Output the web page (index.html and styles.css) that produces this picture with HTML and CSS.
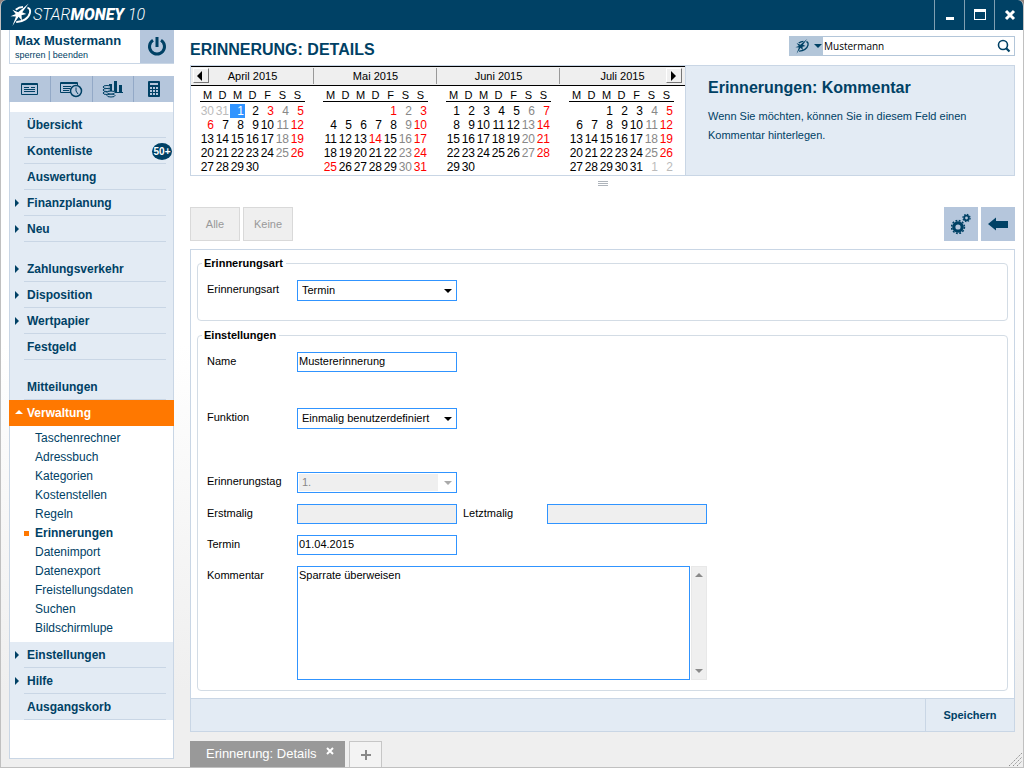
FILE: index.html
```html
<!DOCTYPE html>
<html lang="de">
<head>
<meta charset="utf-8">
<title>StarMoney 10</title>
<link rel="stylesheet" href="styles.css">
</head>
<body>
<svg class="defs" width="0" height="0" aria-hidden="true">
  <symbol id="star" viewBox="0 0 24 24">
    <path fill="currentColor" d="M19.500 0 12.800 9.200 17 11 12 12.200 12.500 18 9 13.800 2.500 23.500 6.200 13.600 .5 13.200 6 11 2.500 6.500 8.500 9z"/>
    <path fill="none" stroke="currentColor" stroke-width="2" d="M6 6.500C8.500 4.500 11 3.700 13.500 3.700M18.200 4.300C20.600 5 21.500 7 20.800 10 19.600 15 13.500 19.500 6.500 19.300"/>
  </symbol>
</svg>
<div class="app">
  <header class="titlebar">
    <div class="logo">
      <svg class="logo-mark" aria-hidden="true"><use href="#star"/></svg>
      <span class="logo-text">STAR<b>MONEY</b> 10</span>
    </div>
    <div class="window-controls">
      <button type="button" aria-label="Minimieren"><svg width="30" height="30"><path fill="#fff" d="M11 17h8v3h-8z"/></svg></button>
      <button type="button" aria-label="Maximieren"><svg width="30" height="30"><path fill="#fff" fill-rule="evenodd" d="M9 9h12v11H9zM10 12v7h10v-7z"/></svg></button>
      <button type="button" aria-label="Schließen"><svg width="30" height="30"><path stroke="#fff" stroke-width="3" d="M11 11l8 8M19 11l-8 8"/></svg></button>
    </div>
  </header>

  <div class="body">
    <aside class="sidebar">
      <div class="user">
        <div class="user-info">
          <strong>Max Mustermann</strong>
          <span><a href="#">sperren</a> | <a href="#">beenden</a></span>
        </div>
        <button type="button" class="power" aria-label="Beenden"><svg width="20" height="22" fill="none" stroke="currentColor" stroke-width="3"><path d="M6 4.200a7.500 7.500 0 1 0 8 0M10 1v10"/></svg></button>
      </div>
      <div class="shortcuts">
        <button type="button" aria-label="Konten"><svg width="18" height="14"><path fill="none" stroke="currentColor" stroke-width="1" d="M.5 1.500h16v11H.5zM.5 2.500h16M3 5.500h5M10 5.500h4M3 7.500h11M3 9.500h11"/></svg></button>
        <button type="button" aria-label="Termine"><svg width="24" height="18" fill="none" stroke="currentColor"><path d="M12 12.500H1.500v-10h17V5M1.500 3.500h17M4 6.500h8M4 8.500h7M4 10.500h6"/><circle cx="17" cy="11" r="5.500" stroke-width="1.500"/><path d="M17 7.500V11l2 3"/></svg></button>
        <button type="button" aria-label="Auswertung"><svg width="22" height="18" fill="currentColor"><path d="M7 4h3v9H7zM12 1h3v12h-3zM17 5h3v8h-3zM12 12h9v1h-9z"/><g fill="#b5c6dc" stroke="currentColor"><ellipse cx="5" cy="13" rx="4" ry="1.500"/><ellipse cx="5" cy="10" rx="4" ry="1.500"/><ellipse cx="5" cy="7" rx="4" ry="1.500"/><ellipse cx="9" cy="15.500" rx="4" ry="1.500"/><ellipse cx="9" cy="12.500" rx="4" ry="1.500"/></g></svg></button>
        <button type="button" aria-label="Taschenrechner"><svg width="14" height="18"><rect x="1" y="1" width="12" height="16" rx="1" fill="currentColor"/><path fill="#b5c6dc" d="M3 3h8v2H3zM3 7h2v2H3zM6 7h2v2H6zM9 7h2v2H9zM3 10h2v2H3zM6 10h2v2H6zM9 10h2v2H9zM3 13h2v2H3zM6 13h2v2H6zM9 13h2v2H9z"/></svg></button>
      </div>
      <nav class="nav">
        <ul class="nav-list">
          <li><a href="#">Übersicht</a></li>
          <li><a href="#">Kontenliste</a><span class="badge">50+</span></li>
          <li><a href="#">Auswertung</a></li>
          <li class="has-sub"><a href="#">Finanzplanung</a></li>
          <li class="has-sub"><a href="#">Neu</a></li>
          <li class="has-sub group-start"><a href="#">Zahlungsverkehr</a></li>
          <li class="has-sub"><a href="#">Disposition</a></li>
          <li class="has-sub"><a href="#">Wertpapier</a></li>
          <li><a href="#">Festgeld</a></li>
          <li class="group-start"><a href="#">Mitteilungen</a></li>
          <li class="open"><a href="#">Verwaltung</a></li>
        </ul>
        <ul class="subnav">
          <li><a href="#">Taschenrechner</a></li>
          <li><a href="#">Adressbuch</a></li>
          <li><a href="#">Kategorien</a></li>
          <li><a href="#">Kostenstellen</a></li>
          <li><a href="#">Regeln</a></li>
          <li class="current"><a href="#">Erinnerungen</a></li>
          <li><a href="#">Datenimport</a></li>
          <li><a href="#">Datenexport</a></li>
          <li><a href="#">Freistellungsdaten</a></li>
          <li><a href="#">Suchen</a></li>
          <li><a href="#">Bildschirmlupe</a></li>
        </ul>
        <ul class="nav-list">
          <li class="has-sub"><a href="#">Einstellungen</a></li>
          <li class="has-sub"><a href="#">Hilfe</a></li>
          <li><a href="#">Ausgangskorb</a></li>
        </ul>
      </nav>
    </aside>

    <main class="main">
      <div class="page-head">
        <h1>ERINNERUNG: DETAILS</h1>
        <form class="search">
          <button type="button" class="search-scope" aria-label="Suchbereich"><svg class="scope-mark" aria-hidden="true"><use href="#star"/></svg><svg width="8" height="5"><path fill="currentColor" d="M0 0h8L4 4z"/></svg></button>
          <input type="text" value="Mustermann" aria-label="Suche">
          <button type="button" class="search-go" aria-label="Suchen"><svg width="14" height="14" fill="none" stroke="currentColor"><circle cx="6" cy="6" r="4.500" stroke-width="1.600"/><path stroke-width="2.200" d="M9 9l3.500 3.500"/></svg></button>
        </form>
      </div>

      <div class="overview">
        <section class="calendar" aria-label="Kalender">
          <div class="month">
            <div class="month-head"><button type="button" class="prev" aria-label="Zurück"><svg width="12" height="12"><path d="M8 1v10L3 6z"/></svg></button>April 2015</div>
            <table>
              <thead><tr><th>M</th><th>D</th><th>M</th><th>D</th><th>F</th><th>S</th><th>S</th></tr></thead>
              <tbody>
                <tr><td class="out">30</td><td class="out">31</td><td class="selected">1</td><td>2</td><td class="off">3</td><td>4</td><td>5</td></tr>
                <tr><td class="off">6</td><td>7</td><td>8</td><td>9</td><td>10</td><td>11</td><td>12</td></tr>
                <tr><td>13</td><td>14</td><td>15</td><td>16</td><td>17</td><td>18</td><td>19</td></tr>
                <tr><td>20</td><td>21</td><td>22</td><td>23</td><td>24</td><td>25</td><td>26</td></tr>
                <tr><td>27</td><td>28</td><td>29</td><td>30</td><td></td><td></td><td></td></tr>
              </tbody>
            </table>
          </div>
          <div class="month">
            <div class="month-head">Mai 2015</div>
            <table>
              <thead><tr><th>M</th><th>D</th><th>M</th><th>D</th><th>F</th><th>S</th><th>S</th></tr></thead>
              <tbody>
                <tr><td></td><td></td><td></td><td></td><td class="off">1</td><td>2</td><td>3</td></tr>
                <tr><td>4</td><td>5</td><td>6</td><td>7</td><td>8</td><td>9</td><td>10</td></tr>
                <tr><td>11</td><td>12</td><td>13</td><td class="off">14</td><td>15</td><td>16</td><td>17</td></tr>
                <tr><td>18</td><td>19</td><td>20</td><td>21</td><td>22</td><td>23</td><td>24</td></tr>
                <tr><td class="off">25</td><td>26</td><td>27</td><td>28</td><td>29</td><td>30</td><td>31</td></tr>
              </tbody>
            </table>
          </div>
          <div class="month">
            <div class="month-head">Juni 2015</div>
            <table>
              <thead><tr><th>M</th><th>D</th><th>M</th><th>D</th><th>F</th><th>S</th><th>S</th></tr></thead>
              <tbody>
                <tr><td>1</td><td>2</td><td>3</td><td>4</td><td>5</td><td>6</td><td>7</td></tr>
                <tr><td>8</td><td>9</td><td>10</td><td>11</td><td>12</td><td>13</td><td>14</td></tr>
                <tr><td>15</td><td>16</td><td>17</td><td>18</td><td>19</td><td>20</td><td>21</td></tr>
                <tr><td>22</td><td>23</td><td>24</td><td>25</td><td>26</td><td>27</td><td>28</td></tr>
                <tr><td>29</td><td>30</td><td></td><td></td><td></td><td></td><td></td></tr>
              </tbody>
            </table>
          </div>
          <div class="month">
            <div class="month-head">Juli 2015<button type="button" class="next" aria-label="Weiter"><svg width="12" height="12"><path d="M4 1v10l5-5z"/></svg></button></div>
            <table>
              <thead><tr><th>M</th><th>D</th><th>M</th><th>D</th><th>F</th><th>S</th><th>S</th></tr></thead>
              <tbody>
                <tr><td></td><td></td><td>1</td><td>2</td><td>3</td><td>4</td><td>5</td></tr>
                <tr><td>6</td><td>7</td><td>8</td><td>9</td><td>10</td><td>11</td><td>12</td></tr>
                <tr><td>13</td><td>14</td><td>15</td><td>16</td><td>17</td><td>18</td><td>19</td></tr>
                <tr><td>20</td><td>21</td><td>22</td><td>23</td><td>24</td><td>25</td><td>26</td></tr>
                <tr><td>27</td><td>28</td><td>29</td><td>30</td><td>31</td><td class="out">1</td><td class="out">2</td></tr>
              </tbody>
            </table>
          </div>
        </section>
        <section class="hint">
          <h2>Erinnerungen: Kommentar</h2>
          <p>Wenn Sie möchten, können Sie in diesem Feld einen Kommentar hinterlegen.</p>
        </section>
      </div>
      <div class="splitter"><svg width="10" height="5"><path stroke="#aeb4bb" d="M0 .5h10M0 2.500h10M0 4.500h10"/></svg></div>

      <div class="toolbar">
        <button type="button" class="text-button" disabled>Alle</button>
        <button type="button" class="text-button" disabled>Keine</button>
        <button type="button" class="icon-button push" aria-label="Optionen"><svg width="20" height="22" fill="none" stroke="currentColor"><circle cx="7" cy="14" r="4.200" stroke-width="3.200"/><circle cx="7" cy="14" r="6.400" stroke-width="1.600" stroke-dasharray="1.850 1.500"/><circle cx="15.500" cy="5" r="2.300" stroke-width="1.800"/><circle cx="15.500" cy="5" r="3.600" stroke-width="1.200" stroke-dasharray="1.450 1.380"/></svg></button>
        <button type="button" class="icon-button" aria-label="Zurück"><svg width="20" height="14"><path fill="currentColor" d="M0 7l8-6.500V4h12v7H8v2.500z"/></svg></button>
      </div>

      <form class="panel">
        <div class="panel-body">
          <fieldset>
            <legend>Erinnerungsart</legend>
            <div class="field">
              <label for="art">Erinnerungsart</label>
              <span class="select"><select id="art"><option>Termin</option></select></span>
            </div>
          </fieldset>
          <fieldset class="settings">
            <legend>Einstellungen</legend>
            <div class="field">
              <label for="name">Name</label>
              <input id="name" type="text" value="Mustererinnerung">
            </div>
            <div class="field after-name">
              <label for="funktion">Funktion</label>
              <span class="select"><select id="funktion"><option>Einmalig benutzerdefiniert</option></select></span>
            </div>
            <div class="field after-function">
              <label for="tag">Erinnerungstag</label>
              <span class="select is-disabled"><select id="tag" disabled><option>1.</option></select></span>
            </div>
            <div class="field">
              <label for="erst">Erstmalig</label>
              <input id="erst" type="text" disabled>
              <label for="letzt" class="second">Letztmalig</label>
              <input id="letzt" type="text" disabled>
            </div>
            <div class="field">
              <label for="termin">Termin</label>
              <input id="termin" type="text" value="01.04.2015">
            </div>
            <div class="field">
              <label for="kommentar">Kommentar</label>
              <textarea id="kommentar">Sparrate überweisen</textarea>
              <div class="scrollbar" aria-hidden="true"><svg width="8" height="4"><path fill="#8a8a8a" d="M4 0l4 4H0z"/></svg><svg width="8" height="4"><path fill="#8a8a8a" d="M0 0h8L4 4z"/></svg></div>
            </div>
          </fieldset>
        </div>
        <div class="panel-foot"><button type="button">Speichern</button></div>
      </form>

      <div class="tabs">
        <div class="tab"><a href="#">Erinnerung: Details</a><button type="button" aria-label="Tab schließen"><svg width="8" height="8"><path stroke="currentColor" stroke-width="2" d="M1 1l6 6M7 1L1 7"/></svg></button></div>
        <button type="button" class="tab-add" aria-label="Neuer Tab"><svg width="10" height="10"><path stroke="currentColor" stroke-width="2" d="M0 5h10M5 0v10"/></svg></button>
      </div>
    </main>
  </div>
  <svg class="grip" width="13" height="13" aria-hidden="true"><path stroke="#8c8c8c" stroke-dasharray="1.400 1" d="M0 13L13 0M4 13l9-9M8 13l5-5"/></svg>
</div>
</body>
</html>
```

FILE: styles.css
```css
* { box-sizing: border-box; }
html { background: #8d827e; }
body { margin: 0; font: 11px "Liberation Sans", Arial, sans-serif; color: #000; }
button, input, select, textarea { font: inherit; color: inherit; margin: 0; padding: 0; border: 0; border-radius: 0; background: none; }
a { color: inherit; text-decoration: none; }
svg { display: block; }
ul { list-style: none; margin: 0; padding: 0; }
.defs { position: absolute; }

.app { position: relative; min-height: 100vh; display: flex; flex-direction: column; border-radius: 6px 6px 0 0; overflow: hidden; background: linear-gradient(#fff 45%, #efefef 90%); border: solid #c0c0c0; border-width: 0 1px 1px; }

.titlebar { display: flex; justify-content: space-between; height: 30px; margin: 0 -1px; background: #004165; color: #fff; }
.logo { display: flex; align-items: center; padding-left: 10px; }
.logo-mark { width: 23px; height: 24px; }
.logo-text { font: italic 300 16px/30px Roboto, sans-serif; }
.logo-text b { font-weight: 900; }
.window-controls { display: flex; }
.window-controls button { width: 30px; border-left: 1px solid #7f9fb2; }

.body { flex: 1; display: flex; padding: 0 8px; }

.sidebar { width: 165px; flex: none; display: flex; flex-direction: column; margin-bottom: 8px; color: #004165; }
.user { display: flex; height: 34px; border: solid #c9d6e5; border-width: 0 0 1px 1px; background: #fff; }
.user-info { flex: 1; padding: 3px 5px; }
.user-info strong { display: block; font-size: 13px; line-height: 16px; }
.user-info span { display: block; font-size: 9px; line-height: 12px; }
.power { width: 34px; display: flex; align-items: center; justify-content: center; background: #b5c6dc; color: #004165; }
.shortcuts { display: grid; grid-template-columns: repeat(4, 1fr); margin-top: 12px; height: 26px; background: #b5c6dc; }
.shortcuts button { display: flex; align-items: center; justify-content: center; color: #004165; }
.shortcuts button + button { border-left: 1px solid #93a9c7; }

.nav { flex: 1; padding-top: 10px; border: solid #c9d6e5; border-width: 0 1px 1px; background: #fff; }
.nav-list { background: #e3ebf4; font-size: 12px; font-weight: bold; }
.nav-list li { display: flex; position: relative; padding: 0 7px 0 14px; }
.nav-list a { flex: 1; padding: 1px 0 0 3px; line-height: 24px; border-bottom: 1px solid #c9d6e5; }
.nav-list .group-start { padding-top: 14px; }
.has-sub::before { content: ""; position: absolute; left: 5px; bottom: 9px; border: 4px solid transparent; border-left-color: #004165; border-right: 0; }
.nav-list .open { margin: 0 -1px; padding: 0 0 0 15px; background: #ff7800; color: #fff; }
.open a { border-bottom-color: #ff7800; }
.open::before { content: ""; position: absolute; left: 6px; top: 10px; border: 4px solid transparent; border-bottom-color: #fff; border-top: 0; }
.badge { position: absolute; right: 1px; top: 5px; width: 20px; border-radius: 50%; background: #004165; color: #fff; font-size: 10px; line-height: 17px; text-align: center; }
.subnav { padding: 3px 0 4px 25px; font-size: 12px; line-height: 19px; }
.subnav li { position: relative; }
.current { font-weight: bold; }
.current::before { content: ""; position: absolute; left: -11px; top: 7px; width: 5px; height: 5px; background: #ff7800; }

.main { flex: 1; min-width: 0; display: flex; flex-direction: column; margin-left: 16px; }
.page-head { display: flex; justify-content: space-between; height: 35px; padding-top: 6px; color: #004165; }
h1 { margin: 0; font-size: 16px; line-height: 28px; }
.search { display: flex; width: 226px; height: 20px; border: 1px solid #b3c6d9; background: #fff; }
.search-scope { display: flex; align-items: center; gap: 4px; width: 33px; padding-left: 5px; background: #b3c6d9; color: #004165; }
.scope-mark { width: 15px; height: 15px; }
.search input { flex: 1; min-width: 0; padding-left: 1px; font: 10px "Open Sans", sans-serif; color: #000; }
.search-go { width: 20px; padding-left: 3px; color: #004165; }

.overview { display: flex; border: 1px solid #c9d6e5; }
.calendar { width: 494px; flex: none; display: grid; grid-template-columns: repeat(3, 123px) 1fr; background: #fff; }
.month-head { display: flex; position: relative; justify-content: center; height: 20px; border: solid #000; border-width: 1px 0; background: #efefef; line-height: 18px; }
.month + .month .month-head::before { content: ""; position: absolute; left: -1px; top: 1px; bottom: 1px; border-left: 1px solid #999; }
.month-head button { position: absolute; top: 1px; width: 16px; height: 15px; border: 1px solid; border-color: #fff #777 #777 #fff; background: #f0f0f0; }
.prev { left: 2px; }
.next { right: 3px; }
.calendar table { width: 105px; margin: 2px 0 1px 9px; border-spacing: 0; table-layout: fixed; }
.calendar th { height: 16px; padding: 0 0 2px; font-weight: normal; line-height: 14px; text-align: center; box-shadow: inset 0 -2px #fff, inset 0 -3px #000; }
.calendar td { height: 14px; padding: 0 1px 0 0; font-size: 12px; line-height: 14px; text-align: right; }
.calendar td:nth-child(6) { color: #888; }
.calendar td:nth-child(7), .calendar .off { color: #f00; }
.calendar td.out { color: #bbb; }
.calendar td.selected { background: #3094ff; color: #fff; }
.hint { flex: 1; padding: 10px 22px; border-left: 1px solid #c9d6e5; background: #e3ebf4; color: #004165; }
.hint h2 { margin: 0; font-size: 16px; line-height: 24px; }
.hint p { max-width: 270px; margin: 7px 0 0; line-height: 19px; }
.splitter { display: flex; justify-content: center; height: 15px; padding-top: 5px; }

.toolbar { display: flex; gap: 3px; margin: 16px 0 8px; }
.toolbar button { height: 34px; }
.text-button { width: 50px; border: 1px solid #d9d9d9; background: #efefef; color: #999; }
.icon-button { width: 34px; display: flex; align-items: center; justify-content: center; background: #b5c6dc; color: #004165; }
.push { margin-left: auto; }

.panel { border: 1px solid #c9d6e5; background: #fff; }
.panel-body { padding: 6px 6px 7px; }
fieldset { margin: 0; min-width: 0; padding: 9px 9px 19px; border: 1px solid #d3dce5; border-radius: 4px; }
.settings { margin-top: 7px; padding-bottom: 10px; }
legend { margin-left: -5px; padding: 0 3px 0 2px; font-weight: bold; line-height: 15px; }
.field { display: flex; align-items: flex-start; }
.field + .field { margin-top: 11px; }
.field + .after-name { margin-top: 36px; }
.field + .after-function { margin-top: 43px; }
.field label { width: 90px; line-height: 18px; }
.field .second { width: 84px; margin-left: 6px; box-sizing: content-box; }
.field input, .select { width: 160px; height: 20px; border: 1px solid #3094ff; background: #fff; }
.field input { padding: 0 0 2px 1px; }
.field input:disabled { background: #efefef; }
.select { position: relative; height: 21px; padding: 1px; }
.select select { display: block; appearance: none; width: 100%; height: 17px; padding-left: 3px; line-height: 17px; opacity: 1; }
.select::after { content: ""; position: absolute; right: 4px; top: 8px; border: 4px solid transparent; border-top-color: #000; border-bottom: 0; pointer-events: none; }
.is-disabled select { width: 139px; background: #efefef; color: #888; }
.is-disabled::after { border-top-color: #aaa; }
textarea { display: block; width: 393px; height: 114px; resize: none; }
.field textarea { padding: 1px; border: 1px solid #3094ff; line-height: 15px; }
.scrollbar { display: flex; flex-direction: column; justify-content: space-between; align-items: center; width: 16px; height: 114px; margin-left: 1px; padding: 6px 0; border: 1px solid #e8e8e8; background: #efefef; }
.panel-foot { display: flex; justify-content: flex-end; height: 33px; border-top: 1px solid #c9d6e5; background: #e3ebf4; }
.panel-foot button { width: 89px; border-left: 1px solid #c9d6e5; font-weight: bold; color: #004165; }

.tabs { display: flex; gap: 4px; height: 26px; margin-top: auto; }
.tab { display: flex; width: 155px; padding: 0 11px 0 16px; justify-content: space-between; background: #999; color: #fff; font-size: 13px; line-height: 26px; }
.tab button { align-self: flex-start; margin-top: 6px; }
.tab-add { display: flex; align-items: center; justify-content: center; width: 33px; border: 1px solid #c6c6c6; border-bottom: 0; color: #888; background: #f3f3f3; }
.grip { position: absolute; right: 1px; bottom: 1px; }
```
